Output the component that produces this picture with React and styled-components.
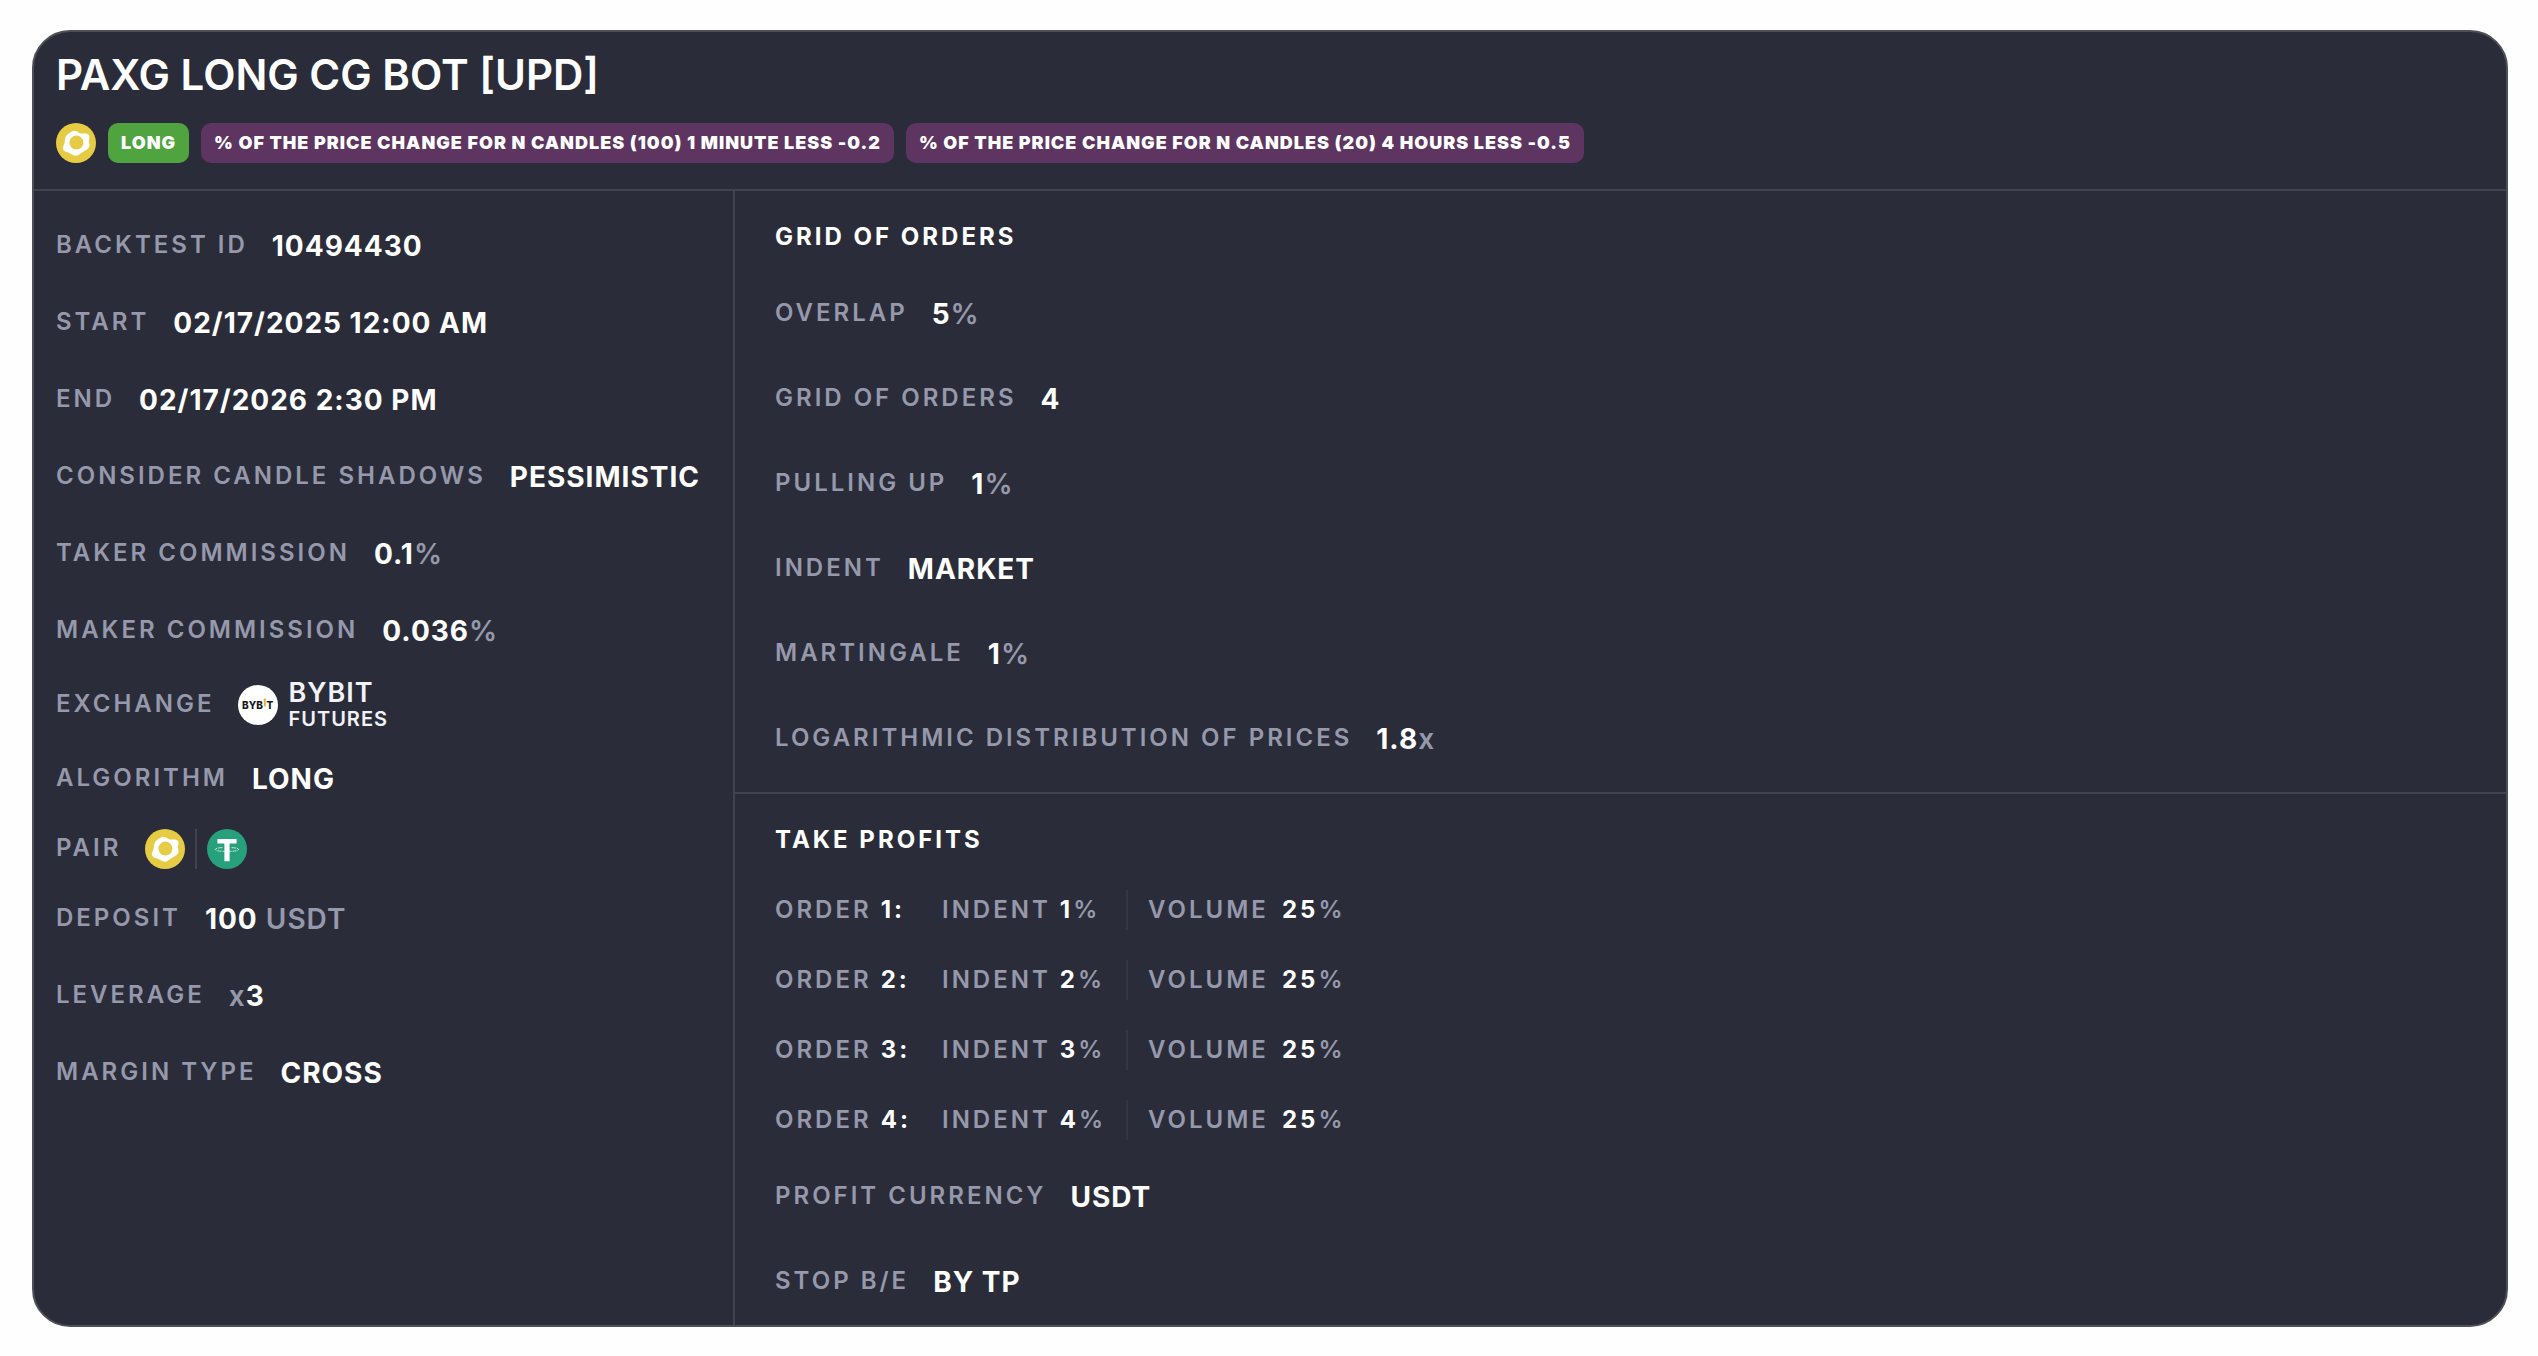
import React from "react";
import styled, { createGlobalStyle } from "styled-components";

const GlobalStyle = createGlobalStyle`
  * {
    box-sizing: border-box;
  }

  body {
    margin: 0;
    background-color: #fefefe;
    font-family: "Inter", "Open Sans", sans-serif;
    color: white;
  }
`;

const Page = styled.main`
  padding: 30px 30px 28px 32px;
`;

const Card = styled.article`
  background-color: #2a2d39;
  border: 2px solid #4f4f58;
  border-radius: 38px;
  overflow: hidden;
`;

const Header = styled.header`
  padding: 19px 22px 26px;
  border-bottom: 2px solid #42434f;
`;

const Title = styled.h1`
  margin: 0 0 24px;
  font-size: 42px;
  line-height: 48px;
  font-weight: 600;
`;

const Tags = styled.div`
  display: flex;
  flex-wrap: wrap;
  align-items: center;
  gap: 12px;
`;

const Tag = styled.span`
  padding: 0 13px;
  border-radius: 10px;
  background-color: ${({ $color }) => $color};
  font-size: 18px;
  line-height: 40px;
  font-weight: 900;
  letter-spacing: 1px;
`;

const Body = styled.div`
  display: flex;
`;

const Sidebar = styled.section`
  flex: none;
  width: 699px;
  padding: 28px 22px;
`;

const Content = styled.div`
  flex: 1;
  border-left: 2px solid #42434f;
`;

const Section = styled.section`
  padding: 31px 40px ${({ $last }) => ($last ? "16px" : "26px")};
  border-bottom: ${({ $last }) => ($last ? "none" : "2px solid #42434f")};
`;

const SectionTitle = styled.h2`
  margin: 0 0 35px;
  font-size: 24px;
  line-height: 30px;
  font-weight: 700;
  letter-spacing: 3px;
`;

const List = styled.dl`
  display: flex;
  flex-direction: column;
  gap: ${({ $gap }) => $gap}px;
  margin: 0;
`;

const Row = styled.div`
  display: flex;
  align-items: center;
  gap: 24px;
  height: ${({ $height }) => $height || 54}px;
`;

const Label = styled.dt`
  padding-bottom: 2px;
  color: #9698ab;
  font-size: 24px;
  line-height: 30px;
  font-weight: 600;
  letter-spacing: 3px;
  white-space: nowrap;
`;

const Value = styled.dd`
  display: flex;
  align-items: center;
  gap: 10px;
  margin: 0;
  font-size: 28px;
  line-height: 34px;
  font-weight: 700;
  letter-spacing: 1px;
  white-space: nowrap;
`;

const Unit = styled.span`
  color: #9698ab;
  font-weight: 600;
`;

const Exchange = styled.div`
  display: flex;
  flex-direction: column;
  color: #f1f1f8;
  font-weight: 600;
`;

const ExchangeName = styled.span`
  font-size: 27px;
  line-height: 28px;
`;

const ExchangeType = styled.span`
  font-size: 20px;
  line-height: 24px;
`;

const PairDivider = styled.span`
  width: 2px;
  height: 40px;
  background-color: #42434f;
`;

const Orders = styled.ul`
  display: flex;
  flex-direction: column;
  gap: 30px;
  margin: 0 0 30px;
  padding: 0;
  list-style: none;
`;

const Order = styled.li`
  display: grid;
  grid-template-columns: 167px 184px auto;
  align-items: center;
  justify-content: start;
  color: #9698ab;
  font-size: 24px;
  line-height: 40px;
  font-weight: 600;
  letter-spacing: 3px;

  b {
    color: white;
    font-weight: 700;
  }
`;

const Volume = styled.span`
  padding-left: 20px;
  border-left: 2px solid #343643;

  b {
    margin-left: 4px;
  }
`;

const Icon = styled.svg`
  display: block;
  flex: none;
  width: 40px;
  height: 40px;
  letter-spacing: 0;
`;

const PaxgIcon = () => (
  <Icon viewBox="0 0 40 40" role="img" aria-label="PAXG">
    <circle cx="20" cy="20" r="20" fill="#e6cc45" />
    <path
      d="M15.8 8.4Q18.6 7 21.4 8.8L24.4 10.4L30 10.6Q33.8 11 33.4 14.4L32.8 18L33.6 22Q33.6 24.8 31.4 26.2L27.4 28.4L22.8 31.8Q20 33.4 17 32L13 29.8L9 28.4Q6.6 27.2 6.8 24.6L8.4 20.6L9.2 15.2Q9.8 12.4 12 11Z"
      fill="white"
    />
    <circle cx="20.4" cy="19.6" r="7" fill="#e6cc45" />
  </Icon>
);

const TetherIcon = () => (
  <Icon viewBox="0 0 40 40" role="img" aria-label="USDT">
    <circle cx="20" cy="20" r="20" fill="#26a17b" />
    <path d="M10.4 10h19.2v4.4H22.6v17.8h-5.2V14.4h-7z" fill="white" />
    <path
      d="M15.4 18.6Q8.4 19 8.4 20.4Q8.4 22.4 20 22.4Q31.6 22.4 31.6 20.4Q31.6 19 24.6 18.6"
      fill="none"
      stroke="white"
      strokeOpacity="0.7"
      strokeWidth="1"
      strokeDasharray="4 1"
    />
  </Icon>
);

const BybitIcon = () => (
  <Icon viewBox="0 0 40 40" role="img" aria-label="Bybit">
    <circle cx="20" cy="20" r="20" fill="white" />
    <g fill="#17181e" fontFamily="Inter, sans-serif" fontSize="10" fontWeight="800">
      <text x="4" y="24">BYB</text>
      <text x="28.6" y="24">T</text>
    </g>
    <path d="M25.8 13.5h2v8h-2z" fill="#f7a73c" />
  </Icon>
);

const conditions = [
  "% OF THE PRICE CHANGE FOR N CANDLES (100) 1 MINUTE LESS -0.2",
  "% OF THE PRICE CHANGE FOR N CANDLES (20) 4 HOURS LESS -0.5",
];

const orders = [1, 2, 3, 4].map((n) => ({ id: n, indent: n, volume: 25 }));

const Field = ({ label, height, children }) => (
  <Row $height={height}>
    <Label>{label}</Label>
    <Value>{children}</Value>
  </Row>
);

// number followed by a dimmed unit
const Amount = ({ value, unit }) => (
  <span>
    {value}
    <Unit>{unit}</Unit>
  </span>
);

const App = () => (
  <Page>
    <GlobalStyle />
    <Card>
      <Header>
        <Title>PAXG LONG CG BOT [UPD]</Title>
        <Tags>
          <PaxgIcon />
          <Tag $color="#4fa440">LONG</Tag>
          {conditions.map((text) => (
            <Tag key={text} $color="#5d3560">
              {text}
            </Tag>
          ))}
        </Tags>
      </Header>

      <Body>
        <Sidebar>
          <List $gap={23}>
            <Field label="BACKTEST ID">10494430</Field>
            <Field label="START">02/17/2025 12:00 AM</Field>
            <Field label="END">02/17/2026 2:30 PM</Field>
            <Field label="CONSIDER CANDLE SHADOWS">PESSIMISTIC</Field>
            <Field label="TAKER COMMISSION">
              <Amount value="0.1" unit="%" />
            </Field>
            <Field label="MAKER COMMISSION">
              <Amount value="0.036" unit="%" />
            </Field>
            <Field label="EXCHANGE" height={48}>
              <BybitIcon />
              <Exchange>
                <ExchangeName>BYBIT</ExchangeName>
                <ExchangeType>FUTURES</ExchangeType>
              </Exchange>
            </Field>
            <Field label="ALGORITHM">LONG</Field>
            <Field label="PAIR" height={40}>
              <PaxgIcon />
              <PairDivider />
              <TetherIcon />
            </Field>
            <Field label="DEPOSIT">
              <Amount value="100" unit=" USDT" />
            </Field>
            <Field label="LEVERAGE">
              <span>
                <Unit>x</Unit>3
              </span>
            </Field>
            <Field label="MARGIN TYPE">CROSS</Field>
          </List>
        </Sidebar>

        <Content>
          <Section>
            <SectionTitle>GRID OF ORDERS</SectionTitle>
            <List $gap={31}>
              <Field label="OVERLAP">
                <Amount value="5" unit="%" />
              </Field>
              <Field label="GRID OF ORDERS">4</Field>
              <Field label="PULLING UP">
                <Amount value="1" unit="%" />
              </Field>
              <Field label="INDENT">MARKET</Field>
              <Field label="MARTINGALE">
                <Amount value="1" unit="%" />
              </Field>
              <Field label="LOGARITHMIC DISTRIBUTION OF PRICES">
                <Amount value="1.8" unit="x" />
              </Field>
            </List>
          </Section>

          <Section $last>
            <SectionTitle>TAKE PROFITS</SectionTitle>
            <Orders>
              {orders.map(({ id, indent, volume }) => (
                <Order key={id}>
                  <span>
                    ORDER <b>{id}:</b>
                  </span>
                  <span>
                    INDENT <b>{indent}</b>%
                  </span>
                  <Volume>
                    VOLUME <b>{volume}</b>%
                  </Volume>
                </Order>
              ))}
            </Orders>
            <List $gap={31}>
              <Field label="PROFIT CURRENCY">USDT</Field>
              <Field label="STOP B/E">BY TP</Field>
            </List>
          </Section>
        </Content>
      </Body>
    </Card>
  </Page>
);

export default App;
